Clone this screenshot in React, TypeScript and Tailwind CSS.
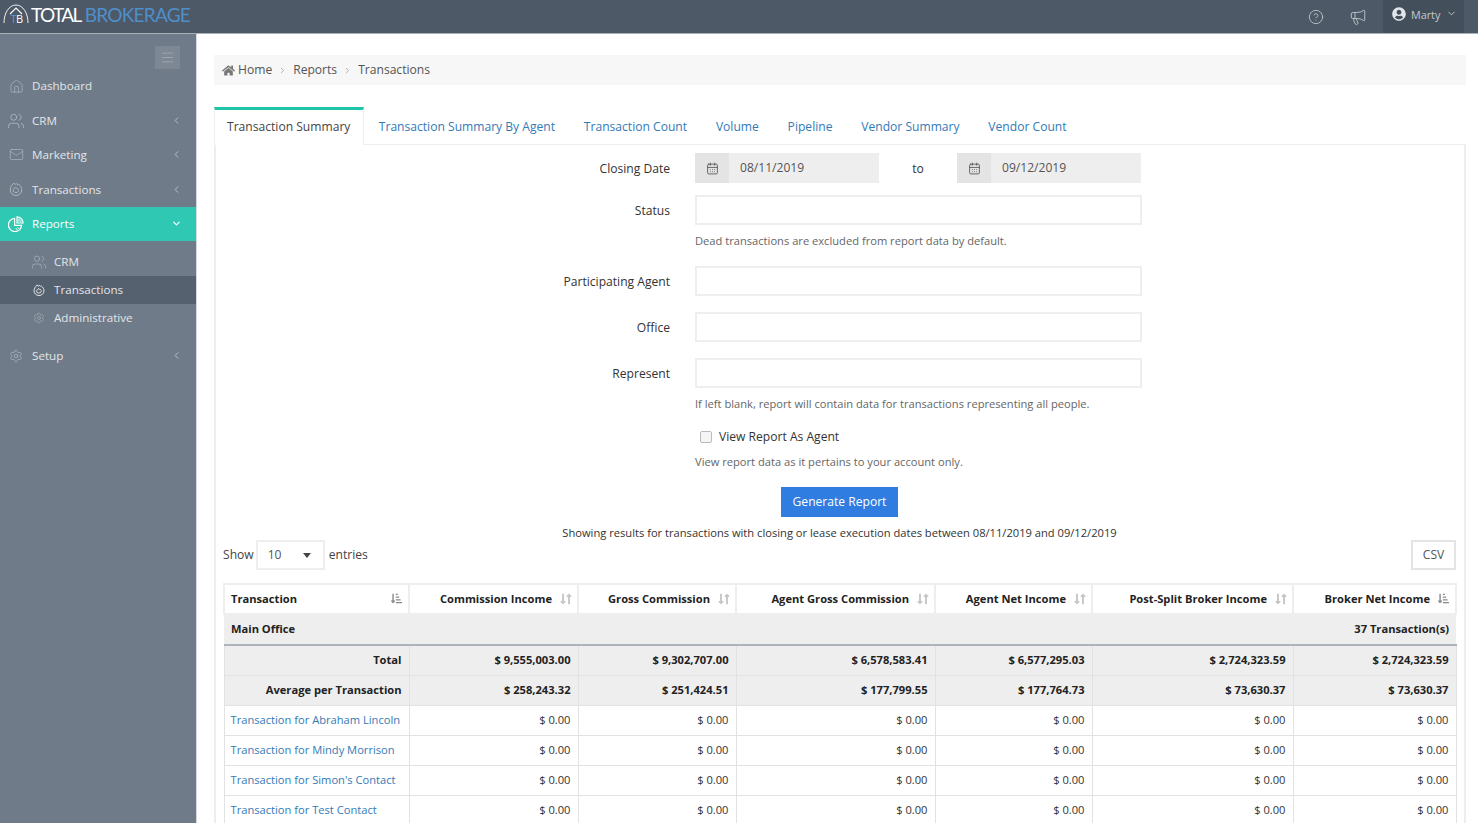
import { House, Users, Mail, Settings, ChevronLeft, ChevronDown, ChevronRight, CircleHelp, Megaphone, Menu, CalendarDays } from 'lucide-react';
import { FaHome, FaUserCircle, FaSortAmountDownAlt, FaLongArrowAltDown, FaLongArrowAltUp } from 'react-icons/fa';

const tabs = ["Transaction Summary By Agent", "Transaction Count", "Volume", "Pipeline", "Vendor Summary", "Vendor Count"];

const columns = [
  { title: "Commission Income", width: "w-[169px]" },
  { title: "Gross Commission", width: "w-[158px]" },
  { title: "Agent Gross Commission", width: "w-[199px]" },
  { title: "Agent Net Income", width: "w-[157px]" },
  { title: "Post-Split Broker Income", width: "w-[201px]" },
  { title: "Broker Net Income", width: "w-[163px]", sorted: true }
];

const totals = [
  { label: "Total", values: ["$ 9,555,003.00", "$ 9,302,707.00", "$ 6,578,583.41", "$ 6,577,295.03", "$ 2,724,323.59", "$ 2,724,323.59"] },
  { label: "Average per Transaction", values: ["$ 258,243.32", "$ 251,424.51", "$ 177,799.55", "$ 177,764.73", "$ 73,630.37", "$ 73,630.37"] }
];

const rows = ["Abraham Lincoln", "Mindy Morrison", "Simon's Contact", "Test Contact"];

function FlameIcon({ className }: { className?: string }) {
  return (
    <svg viewBox="0 0 16 16" fill="none" stroke="currentColor" strokeWidth="1.1" className={className}>
      <path d="M5.6 1.2 C6 3 7.4 3 8.6 1.8 C9 3 10 3.4 11 2.6 C13.4 4.4 14.6 6.6 14.6 9 A6.6 6.4 0 0 1 1.4 9 C1.4 6 3.4 3.4 5.6 1.2 Z" />
      <path d="M4.6 9.6 C5.4 7.6 6.6 6.6 7.6 6 C7.8 7.4 9 7.6 9.6 7 C10.6 8 11.2 9 11 10 A3.3 3.1 0 0 1 4.6 9.6 Z" />
    </svg>
  );
}

function PieIcon({ className }: { className?: string }) {
  return (
    <svg viewBox="0 0 16 16" fill="none" stroke="currentColor" strokeWidth="1.2" className={className}>
      <path d="M6.6 2.4 A6.6 6.6 0 1 0 13.6 9.4 L6.6 9.4 Z" />
      <path d="M9 0.8 A6.4 6.4 0 0 1 15.2 7 L9 7 Z" />
      <path d="M9.6 3.2 H12.4 M9.6 5 H14" strokeWidth="0.9" />
      <path d="M9.5 11.4 L12.4 14 M8 12.2 L9.6 14.8" strokeWidth="0.9" />
    </svg>
  );
}

function SideItem({ icon, label, arrow = true }: { icon: React.ReactNode; label: string; arrow?: boolean }) {
  return (
    <div className="h-[34.4px] flex items-center pl-[7px] pr-[14px] text-[#e3e6e9] text-[11.65px]">
      <span className="w-[18px] flex justify-center text-[#b0b8c0]">{icon}</span>
      <span className="ml-[7px] flex-1">{label}</span>
      {arrow && <ChevronLeft className="w-[11px] h-[11px] text-[#c0c6cc]" strokeWidth={2} />}
    </div>
  );
}

function FormRow({ label, help }: { label: string; help?: string }) {
  return (
    <div className="flex">
      <div className="w-[456px] h-[30px] pt-[1px] pr-[25px] text-right text-[#333] leading-[30px] shrink-0">{label}</div>
      <div className="w-[447px]">
        <div className="h-[30px] border-2 border-[#eeeeee] bg-white" />
        {help && <p className="mt-[8px] text-[11.15px] leading-[16px] text-[#666]">{help}</p>}
      </div>
    </div>
  );
}

function DateBox({ value }: { value: string }) {
  return (
    <div className="w-[184px] h-[30px] bg-[#eeeeee] flex items-center">
      <span className="w-[34px] h-full bg-[#e4e4e4] flex items-center justify-center">
        <CalendarDays className="w-[13px] h-[13px] text-[#555]" strokeWidth={1.6} />
      </span>
      <span className="ml-[11px] text-[#555]">{value}</span>
    </div>
  );
}

export default function App() {
  return (
    <div className="h-screen overflow-hidden flex flex-col bg-white text-[12.1px] text-[#333] font-['Open_Sans','Liberation_Sans',sans-serif]">
      {/* Top bar */}
      <header className="h-[34px] shrink-0 bg-[#4d5967] border-b border-[#a9b0b8] flex items-center">
        <div className="w-[196px] flex items-center pl-[3px] h-full shrink-0 -mt-[5px]">
          <svg width="26" height="24" viewBox="0 0 26 24" fill="none" className="text-white">
            <path d="M1 21 C1 11 6 3 13 3 C20 3 25 11 25 21" stroke="currentColor" strokeWidth="0.9" />
            <path d="M7 12 L13 6 L19 12" stroke="currentColor" strokeWidth="1.1" />
            <text x="7.5" y="21" fontSize="11" fill="#5a9bd6" fontFamily="Open Sans">T</text>
            <text x="13" y="21" fontSize="11" fill="#fff" fontFamily="Open Sans">B</text>
          </svg>
          <span className="ml-[2px] text-[19px] tracking-[-1.6px] font-['Lato',sans-serif] text-white leading-none">TOTAL</span>
          <span className="ml-[4px] text-[19px] tracking-[-0.75px] font-['Lato',sans-serif] text-[#4f8fc9] leading-none">BROKERAGE</span>
        </div>
        <div className="flex-1" />
        <CircleHelp className="w-[16px] h-[16px] text-[#c3c8ce]" strokeWidth={1.3} />
        <Megaphone className="ml-[25px] w-[18px] h-[18px] text-[#c3c8ce]" strokeWidth={1.2} />
        <div className="ml-[16px] mr-[14px] w-[81px] h-full bg-[#444f5c] flex items-start pt-[7px] pl-[9px] text-[#c3c8ce] text-[10.8px]">
          <FaUserCircle className="w-[14px] h-[14px] text-[#e3e6e9]" />
          <span className="ml-[5px] leading-[16px]">Marty</span>
          <ChevronDown className="ml-[6px] mt-[1px] w-[11px] h-[11px]" strokeWidth={2} />
        </div>
      </header>

      <div className="flex-1 flex min-h-0">
        {/* Sidebar */}
        <aside className="w-[197px] shrink-0 bg-[#6f7b88] border-r border-[#d5d8dc] pt-[12px]">
          <div className="flex justify-end pr-[16px]">
            <button className="w-[25px] h-[23px] bg-[#7d8894] flex items-center justify-center">
              <Menu className="w-[15px] h-[15px] text-[#a6aeb7]" strokeWidth={1.2} />
            </button>
          </div>
          <SideItem icon={<House className="w-[15px] h-[15px]" strokeWidth={1.1} />} label="Dashboard" arrow={false} />
          <SideItem icon={<Users className="w-[18px] h-[18px]" strokeWidth={1.1} />} label="CRM" />
          <SideItem icon={<Mail className="w-[15px] h-[15px]" strokeWidth={1.1} />} label="Marketing" />
          <SideItem icon={<FlameIcon className="w-[14px] h-[14px]" />} label="Transactions" />
          <div className="h-[34px] bg-[#2fc8b2] flex items-center pl-[7px] pr-[14px] text-white text-[11.65px]">
            <span className="w-[18px] flex justify-center"><PieIcon className="w-[16px] h-[16px]" /></span>
            <span className="ml-[7px] flex-1">Reports</span>
            <ChevronDown className="w-[11px] h-[11px]" strokeWidth={2.5} />
          </div>
          <div className="pt-[7px] pb-[6px] text-[#e3e6e9] text-[11.65px]">
            <div className="h-[28px] flex items-center pl-[31px]">
              <Users className="w-[16px] h-[16px] text-[#a9b1ba]" strokeWidth={1.1} />
              <span className="ml-[7px]">CRM</span>
            </div>
            <div className="h-[28px] flex items-center pl-[33px] bg-[#56616f]">
              <FlameIcon className="w-[12px] h-[12px] text-white" />
              <span className="ml-[9px]">Transactions</span>
            </div>
            <div className="h-[29px] flex items-center pl-[33px]">
              <Settings className="w-[12px] h-[12px] text-[#a9b1ba]" strokeWidth={1.2} />
              <span className="ml-[9px]">Administrative</span>
            </div>
          </div>
          <SideItem icon={<Settings className="w-[14px] h-[14px]" strokeWidth={1.2} />} label="Setup" />
        </aside>

        {/* Main content */}
        <main className="flex-1 min-w-0 pl-[17px] pr-[12px] pt-[21px]">
          <nav className="h-[30px] bg-[#f7f7f7] flex items-center pl-[8px] text-[#555]">
            <FaHome className="w-[13px] h-[13px] text-[#777]" />
            <span className="ml-[3px]">Home</span>
            <ChevronRight className="mx-[6px] w-[9px] h-[9px] text-[#999]" />
            <span>Reports</span>
            <ChevronRight className="mx-[6px] w-[9px] h-[9px] text-[#999]" />
            <span>Transactions</span>
          </nav>

          <div className="mt-[22px] flex h-[38px]">
            <div className="pl-[12px] pr-[13px] border-x border-[#eeeeee] border-t-[3px] border-t-[#1fc5a9] leading-[34px] text-[#444] bg-white whitespace-nowrap">
              Transaction Summary
            </div>
            {tabs.map((tab) => (
              <div key={tab} className="px-[14.4px] leading-[40px] text-[#337ab7] border-b border-[#eeeeee] whitespace-nowrap">{tab}</div>
            ))}
            <div className="flex-1 border-b border-[#eeeeee]" />
          </div>

          <section className="border-x-2 border-[#eeeeee] pl-[7px] pr-[8px] pt-[8px]">
            {/* Filters */}
            <div className="pl-[16px] w-[930px]">
              <div className="flex h-[30px]">
                <div className="w-[456px] pr-[25px] text-right leading-[31px] shrink-0">Closing Date</div>
                <DateBox value="08/11/2019" />
                <div className="w-[78px] text-center leading-[31px]">to</div>
                <DateBox value="09/12/2019" />
              </div>
              <div className="mt-[12px]"><FormRow label="Status" help="Dead transactions are excluded from report data by default." /></div>
              <div className="mt-[17px]"><FormRow label="Participating Agent" /></div>
              <div className="mt-[16px]"><FormRow label="Office" /></div>
              <div className="mt-[16px]"><FormRow label="Represent" help="If left blank, report will contain data for transactions representing all people." /></div>
              <div className="ml-[456px] mt-[17px] flex items-center h-[16px]">
                <span className="ml-[5px] w-[12px] h-[12px] border border-[#bbbbbb] rounded-[2px] bg-[#f5f5f5]" />
                <span className="ml-[7px]">View Report As Agent</span>
              </div>
              <p className="ml-[456px] mt-[9px] text-[11.15px] leading-[16px] text-[#666]">View report data as it pertains to your account only.</p>
            </div>

            <div className="mt-[17px] flex justify-center">
              <button className="w-[117px] h-[30px] bg-[#2f7de1] text-white">Generate Report</button>
            </div>
            <p className="mt-[7px] text-center text-[11.15px] leading-[18px]">Showing results for transactions with closing or lease execution dates between 08/11/2019 and 09/12/2019</p>

            <div className="-mt-[2px] flex items-center h-[30px] text-[#444]">
              <span>Show</span>
              <div className="ml-[2px] w-[69px] h-[30px] border-2 border-[#eeeeee] flex items-center pl-[10px] pr-[12px] text-[#555]">
                <span className="flex-1">10</span>
                <span className="w-0 h-0 border-x-[4.5px] border-x-transparent border-t-[5px] border-t-[#444]" />
              </div>
              <span className="ml-[4px]">entries</span>
              <div className="flex-1" />
              <button className="w-[45px] h-[30px] border-2 border-[#e4e4e4] text-[#555]">CSV</button>
            </div>

            {/* Report table */}
            <table className="mt-[13px] w-[1232px] table-fixed border-collapse text-[11.15px]">
              <colgroup>
                <col className="w-[185px]" />
                {columns.map((col) => <col key={col.title} className={col.width} />)}
              </colgroup>
              <thead>
                <tr className="h-[30px]">
                  <th className="border-2 border-[#eeeeee] px-[6px] text-left font-bold text-[#222]">
                    <div className="flex items-center justify-between">
                      <span>Transaction</span>
                      <FaSortAmountDownAlt className="w-[11px] h-[11px] text-[#888]" />
                    </div>
                  </th>
                  {columns.map((col) => (
                    <th key={col.title} className="border-2 border-[#eeeeee] px-[6px] font-bold text-[#222]">
                      <div className="flex items-center justify-end gap-[8px]">
                        <span className="whitespace-nowrap">{col.title}</span>
                        {col.sorted
                          ? <FaSortAmountDownAlt className="w-[11px] h-[11px] text-[#888]" />
                          : (
                            <span className="w-[11px] flex justify-center text-[#c6c6c6]">
                              <FaLongArrowAltDown className="w-[6px] h-[12px] shrink-0" />
                              <FaLongArrowAltUp className="w-[6px] h-[12px] shrink-0" />
                            </span>
                          )}
                      </div>
                    </th>
                  ))}
                </tr>
              </thead>
              <tbody>
                <tr className="h-[31px] bg-[#eeeeee] border-b-2 border-b-[#adb3ba] font-bold text-[#222]">
                  <td className="px-[7px]">Main Office</td>
                  <td colSpan={6} className="px-[7px] text-right">37 Transaction(s)</td>
                </tr>
                {totals.map((row) => (
                  <tr key={row.label} className="h-[30px] bg-[#eeeeee] font-bold text-[#222]">
                    <td className="border border-[#e2e2e2] px-[7px] text-right">{row.label}</td>
                    {row.values.map((value, i) => (
                      <td key={i} className="border border-[#e2e2e2] px-[7px] text-right">{value}</td>
                    ))}
                  </tr>
                ))}
                {rows.map((name) => (
                  <tr key={name} className="h-[30px]">
                    <td className="border border-[#e2e2e2] px-[6px] text-[#337ab7] whitespace-nowrap">Transaction for {name}</td>
                    {columns.map((col) => (
                      <td key={col.title} className="border border-[#e2e2e2] px-[7px] text-right text-[#333]">$ 0.00</td>
                    ))}
                  </tr>
                ))}
              </tbody>
            </table>
          </section>
        </main>
      </div>
    </div>
  );
}
